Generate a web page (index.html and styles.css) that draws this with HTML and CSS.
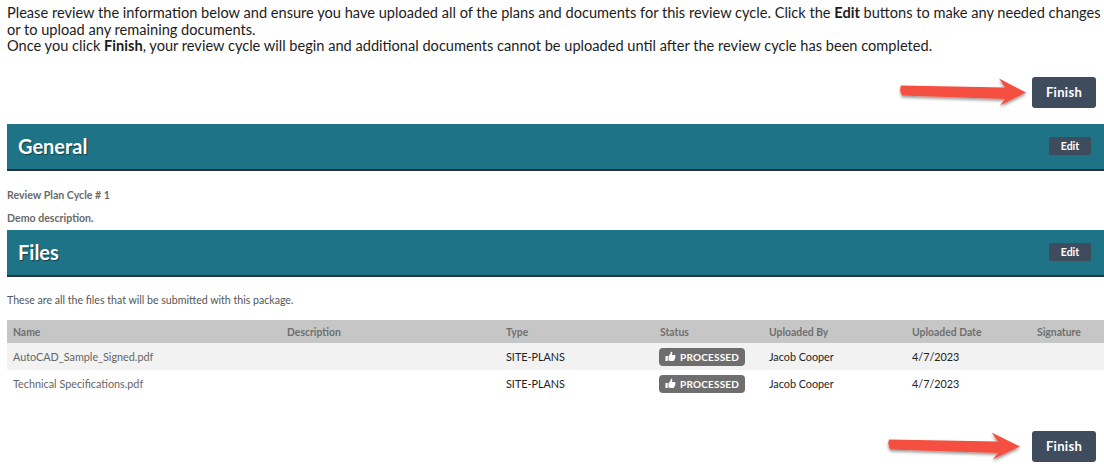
FILE: index.html
```html
<!DOCTYPE html>
<html lang="en">
<head>
  <meta charset="UTF-8" />
  <title>Review Plan Cycle</title>
  <link rel="stylesheet" href="styles.css">
</head>
<body>
  <svg class="icon-defs" width="0" height="0">
    <defs>
      <filter id="arrowShadow" x="-10%" y="-30%" width="120%" height="170%">
        <feDropShadow dx="0" dy="2" stdDeviation="1.6" flood-color="#000" flood-opacity="0.4" />
      </filter>
      <symbol id="finishArrow" viewBox="0 0 130 36" preserveAspectRatio="none">
        <path d="M3 10.5 L107 12.5 L101 3.5 L128 17.5 L102 30.5 L107 24 L4 20.5 Q1 15 3 10.5 Z" fill="#f4503f" filter="url(#arrowShadow)" />
      </symbol>
      <symbol id="thumb" viewBox="0 0 12 12">
        <path d="M0.5 5.5H3V11H0.5Z M3.8 5.6 L6 3 L6.4 0.8 Q8 0.6 8 2.4 L7.5 4.4 H10.6 Q11.8 4.6 11.3 5.9 Q11.7 7 11 7.5 Q11.2 8.6 10.4 9 Q10.4 10.6 9 10.8 H5.6 L3.8 10Z" fill="#fff" />
      </symbol>
    </defs>
  </svg>

  <div class="intro">
    Please review the information below and ensure you have uploaded all of the plans and documents for this review cycle. Click the <b>Edit</b> buttons to make any needed changes<br>
    or to upload any remaining documents.<br>
    Once you click <b>Finish</b>, your review cycle will begin and additional documents cannot be uploaded until after the review cycle has been completed.
  </div>

  <div class="finish-row top">
    <svg class="finish-arrow"><use href="#finishArrow" /></svg>
    <button class="finish-btn" type="button">Finish</button>
  </div>

  <div class="section-bar">
    <h2>General</h2>
    <button class="edit-btn" type="button">Edit</button>
  </div>
  <p class="meta first">Review Plan Cycle # 1</p>
  <p class="meta second">Demo description.</p>

  <div class="section-bar">
    <h2>Files</h2>
    <button class="edit-btn" type="button">Edit</button>
  </div>
  <p class="files-note">These are all the files that will be submitted with this package.</p>

  <table class="files-table">
    <thead>
      <tr>
        <th class="col-name">Name</th>
        <th class="col-desc">Description</th>
        <th class="col-type">Type</th>
        <th class="col-status">Status</th>
        <th class="col-by">Uploaded By</th>
        <th class="col-date">Uploaded Date</th>
        <th>Signature</th>
      </tr>
    </thead>
    <tbody>
      <tr class="striped">
        <td class="file-name">AutoCAD_Sample_Signed.pdf</td>
        <td></td>
        <td>SITE-PLANS</td>
        <td><span class="status-pill"><svg class="thumb"><use href="#thumb" /></svg>PROCESSED</span></td>
        <td>Jacob Cooper</td>
        <td>4/7/2023</td>
        <td></td>
      </tr>
      <tr>
        <td class="file-name">Technical Specifications.pdf</td>
        <td></td>
        <td>SITE-PLANS</td>
        <td><span class="status-pill"><svg class="thumb"><use href="#thumb" /></svg>PROCESSED</span></td>
        <td>Jacob Cooper</td>
        <td>4/7/2023</td>
        <td></td>
      </tr>
    </tbody>
  </table>

  <div class="finish-row bottom">
    <svg class="finish-arrow"><use href="#finishArrow" /></svg>
    <button class="finish-btn" type="button">Finish</button>
  </div>
</body>
</html>
```

FILE: styles.css
```css
html, body {
  margin: 0;
  padding: 0;
  background: #fff;
  overflow: hidden;
}
body {
  height: 470px;
  padding-left: 7px;
  font-family: 'Lato', Arial, sans-serif;
  color: #222;
}
.icon-defs {
  position: absolute;
}
.intro {
  padding-top: 5px;
  font-size: 14.6px;
  line-height: 16.5px;
  color: #1c1c1c;
}
.intro b {
  font-weight: 700;
}
.finish-row {
  display: flex;
  justify-content: flex-end;
  align-items: center;
  gap: 4px;
  padding-right: 8px;
}
.finish-row.top {
  margin-top: 20px;
  margin-bottom: 13.5px;
}
.finish-row.bottom {
  margin-top: 31.5px;
  gap: 10px;
}
.finish-arrow {
  width: 130px;
  height: 36px;
}
.finish-row.bottom .finish-arrow {
  width: 136px;
}
.finish-btn {
  width: 64px;
  height: 31px;
  padding: 0 0 2px 0;
  border: none;
  border-radius: 3px;
  background: #3f4c5e;
  color: #fff;
  font-family: inherit;
  font-size: 13px;
  font-weight: 700;
  letter-spacing: 0.3px;
}
.section-bar {
  display: flex;
  align-items: center;
  justify-content: space-between;
  height: 43px;
  padding: 0 13px 2px 11px;
  background: #1f7386;
  border-bottom: 2px solid #26353d;
}
.section-bar h2 {
  margin: 0;
  color: #fff;
  font-size: 20px;
  font-weight: 700;
  text-shadow: 1px 1px 1px rgba(0,0,0,0.45);
}
.edit-btn {
  width: 42px;
  height: 18px;
  padding: 0;
  border: none;
  border-radius: 2px;
  background: #3f4c5e;
  color: #fff;
  font-family: inherit;
  font-size: 10.5px;
  font-weight: 700;
}
.meta {
  margin: 0;
  font-size: 10.6px;
  line-height: 12px;
  font-weight: 700;
  color: #6a6a6a;
}
.meta.first {
  margin-top: 18px;
}
.meta.second {
  margin-top: 11px;
  margin-bottom: 6px;
}
.files-note {
  margin: 17px 0 14px 0;
  font-size: 10.6px;
  line-height: 12px;
  color: #555;
}
.files-table {
  width: 1097px;
  border-collapse: collapse;
  table-layout: fixed;
  font-size: 10.8px;
  color: #222;
}
.files-table th {
  box-sizing: border-box;
  height: 23px;
  padding: 0 0 0 6px;
  background: #c6c6c6;
  color: #6f6f6f;
  font-size: 10.4px;
  font-weight: 700;
  text-align: left;
}
.files-table td {
  height: 27px;
  padding: 0 0 0 6px;
}
.files-table .col-name { width: 274px; }
.files-table .col-desc { width: 219px; }
.files-table .col-type { width: 154px; }
.files-table .col-status { width: 109px; }
.files-table .col-by { width: 143px; }
.files-table .col-date { width: 125px; }
.striped td {
  background: #f2f2f2;
}
.file-name {
  color: #666;
}
.status-pill {
  display: inline-flex;
  align-items: center;
  gap: 4px;
  height: 18px;
  margin-left: -1px;
  padding: 0 6px;
  border-radius: 4px;
  background: #6e6e6e;
  color: #fff;
  font-size: 10px;
  font-weight: 700;
  letter-spacing: 0.2px;
  vertical-align: middle;
}
.thumb {
  width: 11px;
  height: 11px;
}
```
